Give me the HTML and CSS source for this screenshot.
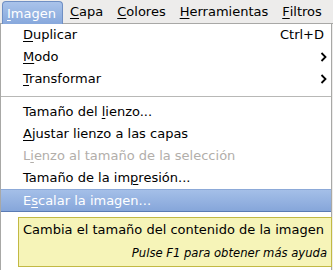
FILE: index.html
```html
<!DOCTYPE html>
<html>
<head>
    <title>Imagen</title>
    <link rel="stylesheet" href="styles.css">
</head>
<body>

<div class="menubar">
    <span class="top active"><u>I</u>magen</span>
    <span class="top"><u>C</u>apa</span>
    <span class="top"><u>C</u>olores</span>
    <span class="top"><u>H</u>erramientas</span>
    <span class="top"><u>F</u>iltros</span>
</div>

<div class="menu">
    <div class="item"><span><u>D</u>uplicar</span><span class="accel">Ctrl+D</span></div>
    <div class="item"><span><u>M</u>odo</span>
        <svg class="arrow" width="7" height="10" viewBox="0 0 7 10"><polyline points="1.5,1 5.5,5 1.5,9" fill="none" stroke="#000" stroke-width="1.8"/></svg></div>
    <div class="item"><span><u>T</u>ransformar</span>
        <svg class="arrow" width="7" height="10" viewBox="0 0 7 10"><polyline points="1.5,1 5.5,5 1.5,9" fill="none" stroke="#000" stroke-width="1.8"/></svg></div>
    <div class="sep"></div>
    <div class="item"><span>Tamaño del <u>l</u>ienzo...</span></div>
    <div class="item"><span><u>A</u>justar lienzo a las capas</span></div>
    <div class="item disabled"><span>L<u>i</u>enzo al tamaño de la selección</span></div>
    <div class="item"><span>Tamaño de la im<u>p</u>resión...</span></div>
    <div class="item hover"><span>E<u>s</u>calar la imagen...</span></div>

    <div class="tooltip">
        <div class="tip-main">Cambia el tamaño del contenido de la imagen</div>
        <div class="tip-help">Pulse F1 para obtener más ayuda</div>
    </div>
</div>

</body>
</html>
```

FILE: styles.css
```css
BODY {
    margin : 0;
    width : 333px;
    height : 270px;
    overflow : hidden;
    background : #edeceb;
    font-family : "DejaVu Sans", Verdana, sans-serif;
    font-size : 13px;
    color : #000;
}
U {
    text-decoration-thickness : 1px;
    text-underline-offset : 2px;
}

.menubar {
    display : flex;
    height : 23px;
    padding-left : 2px;
    background : #edeceb;
    border-bottom : 1px solid #a8a8a6;
}
.top {
    display : flex;
    align-items : center;
    padding : 0 7px 1px 6px;
    margin-right : 1px;
    height : 21px;
    margin-top : 1px;
}
.top.active {
    color : #fff;
    background : linear-gradient(#a9c3ea, #87a8dc);
    border : 1px solid #6f8fc4;
    border-bottom : none;
    border-radius : 4px 4px 0 0;
    padding : 0 6px 0 4px;
    height : 22px;
}

.menu {
    position : relative;
    width : 330px;
    height : 246px;
    background : #fff;
    border-left : 1px solid #a8a8a6;
    border-right : 1px solid #a8a8a6;
}
.item {
    display : flex;
    align-items : center;
    justify-content : space-between;
    height : 21px;
    padding : 0 7px 1px 22px;
}
.arrow {
    margin-right : -3px;
}
.sep {
    height : 11px;
    background : linear-gradient(#fff 6px, #b8b8b6 6px, #b8b8b6 7px, #fff 7px);
}
.disabled {
    color : #b2aeaa;
}
.hover {
    color : #fff;
    height : 21px;
    padding-bottom : 0;
    background : linear-gradient(#a4bfe8, #86a6da);
    border-top : 1px solid #8ca9d8;
    border-bottom : 1px solid #5a7bb4;
}

.tooltip {
    position : absolute;
    left : 17px;
    top : 193px;
    width : 304px;
    height : 47px;
    padding : 1px 4px 0 4px;
    background : #f6f4b8;
    border : 1px solid #c2b944;
}
.tip-main {
    height : 22px;
    line-height : 22px;
}
.tip-help {
    text-align : right;
    font-size : 11.6px;
    font-style : italic;
    line-height : 24px;
}
```
